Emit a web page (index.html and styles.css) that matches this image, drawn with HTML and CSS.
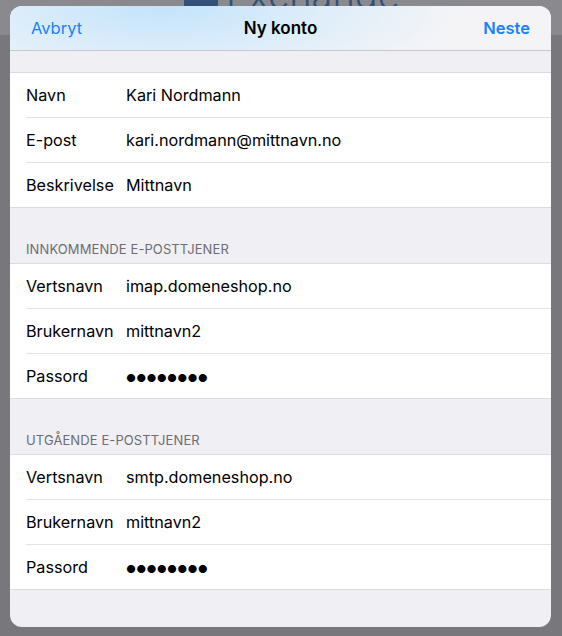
FILE: index.html
```html
<!DOCTYPE html>
<html lang="no">

<head>
    <meta charset="UTF-8">
    <meta name="viewport" content="width=device-width, initial-scale=1.0">
    <title>Ny konto</title>
    <link rel="stylesheet" href="styles.css">
</head>

<body>
    <div class="backdrop">
        <!-- logo bak arket, bare nederste kant synes -->
        <div class="behind-logo">
            <span class="logo-box"></span>
            <span class="logo-text">Exchange</span>
        </div>

        <div class="sheet">
            <header class="navbar">
                <a href="#" class="nav-btn">Avbryt</a>
                <span class="nav-title">Ny konto</span>
                <a href="#" class="nav-btn nav-next">Neste</a>
            </header>

            <div class="gap"></div>
            <div class="group">
                <div class="row"><span class="label">Navn</span><span class="value">Kari Nordmann</span></div>
                <div class="row"><span class="label">E-post</span><span class="value">kari.nordmann@mittnavn.no</span></div>
                <div class="row"><span class="label">Beskrivelse</span><span class="value">Mittnavn</span></div>
            </div>

            <div class="section-title">Innkommende e-posttjener</div>
            <div class="group">
                <div class="row"><span class="label">Vertsnavn</span><span class="value">imap.domeneshop.no</span></div>
                <div class="row"><span class="label">Brukernavn</span><span class="value">mittnavn2</span></div>
                <div class="row"><span class="label">Passord</span><span class="value dots">&#9679;&#9679;&#9679;&#9679;&#9679;&#9679;&#9679;&#9679;</span></div>
            </div>

            <div class="section-title">Utgående e-posttjener</div>
            <div class="group">
                <div class="row"><span class="label">Vertsnavn</span><span class="value">smtp.domeneshop.no</span></div>
                <div class="row"><span class="label">Brukernavn</span><span class="value">mittnavn2</span></div>
                <div class="row"><span class="label">Passord</span><span class="value dots">&#9679;&#9679;&#9679;&#9679;&#9679;&#9679;&#9679;&#9679;</span></div>
            </div>
        </div>
    </div>
</body>

</html>
```

FILE: styles.css
```css
body {
    margin: 0;
    padding: 0;
    font-family: Inter, "Noto Sans", sans-serif;
    background-color: #77777c;
}

.backdrop {
    position: relative;
    height: 636px;
    padding: 6px 11px 0 10px;
    box-sizing: border-box;
    background: linear-gradient(to bottom, #8a8a8e 0, #8a8a8e 35px, #77777c 35px);
    overflow: hidden;
}

.behind-logo {
    position: absolute;
    top: -28px;
    left: 184px;
    display: flex;
    align-items: center;
    gap: 8px;
    color: #34507a;
}

.logo-box {
    width: 34px;
    height: 30px;
    background-color: #34507a;
}

.logo-text {
    font-size: 38px;
    font-weight: 300;
}

.sheet {
    position: relative;
    height: 621px;
    background-color: #efeff4;
    border-radius: 12px;
    overflow: hidden;
}

.navbar {
    height: 44px;
    display: flex;
    align-items: center;
    justify-content: space-between;
    padding: 0 21px;
    border-bottom: 1px solid #c8c7cc;
    background: radial-gradient(ellipse 300px 90px at 28% 0%, #c3e3fc 0%, #dcedfa 50%, #f4f4f7 100%);
}

.nav-btn {
    color: #1a82fb;
    text-decoration: none;
    font-size: 16.5px;
    width: 80px;
}

.nav-next {
    text-align: right;
    font-weight: 600;
}

.nav-title {
    font-size: 17px;
    font-weight: 600;
    color: #000;
}

.gap {
    height: 21px;
}

.group {
    background-color: #fff;
    border-top: 1px solid #dcdce0;
    border-bottom: 1px solid #dcdce0;
    padding-left: 16px;
}

.row {
    height: 44px;
    display: grid;
    grid-template-columns: 100px 1fr;
    align-items: center;
    font-size: 16.2px;
    color: #000;
    border-bottom: 1px solid #e3e3e6;
}

.row:last-child {
    border-bottom: none;
}

.dots {
    font-size: 11px;
    letter-spacing: 0.2px;
    padding-top: 3px;
}

.section-title {
    height: 55px;
    box-sizing: border-box;
    padding: 0 0 6px 16px;
    display: flex;
    align-items: flex-end;
    font-size: 13px;
    color: #6d6d72;
    text-transform: uppercase;
    letter-spacing: 0.1px;
}
```
